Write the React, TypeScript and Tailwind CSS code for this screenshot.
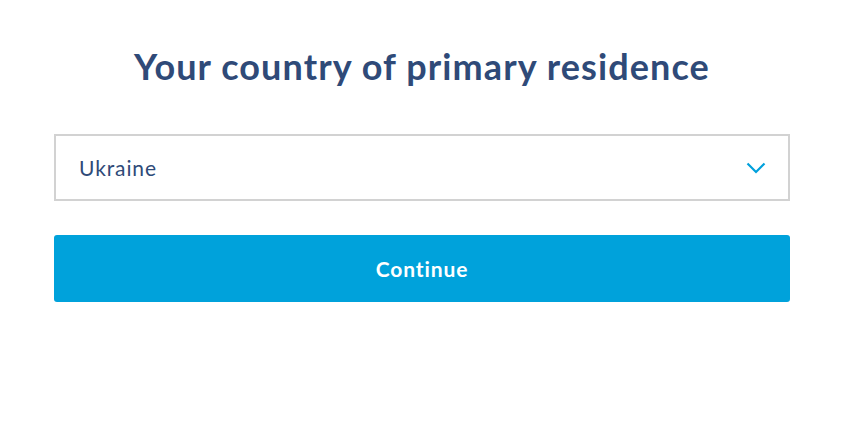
import React from "react";

export default function App() {
  return (
    <div className="w-[860px] h-[428px] bg-white" style={{ fontFamily: "Lato, 'Open Sans', sans-serif" }}>
      <div className="w-[736px] ml-[54px] pt-[43px] flex flex-col">
        <h1 className="text-center text-[36px] leading-[46px] font-bold text-[#2f4a78] tracking-[1.1px]">
          Your country of primary residence
        </h1>
        <div className="mt-[45px] h-[67px] border-2 border-[#d2d2d2] flex items-center justify-between pl-[23px] pr-[22px]">
          <span className="text-[21px] text-[#2f4a78] tracking-[0.9px]">Ukraine</span>
          <svg width="20" height="12" viewBox="0 0 20 12" fill="none">
            <path d="M1.5 1.5 L10 10 L18.5 1.5" stroke="#00a0dc" strokeWidth="2.2" />
          </svg>
        </div>
        <button className="mt-[34px] h-[67px] rounded-[3px] bg-[#00a2db] text-white text-[21px] font-bold tracking-[0.9px]">
          Continue
        </button>
      </div>
    </div>
  );
}
